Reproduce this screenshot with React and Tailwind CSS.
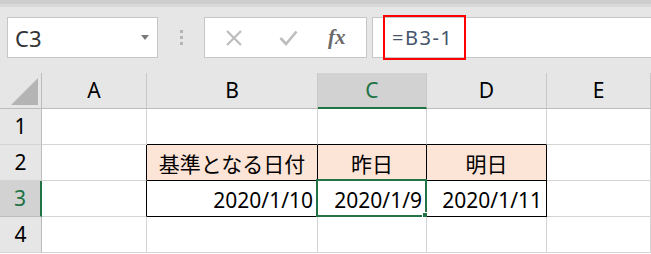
import React from "react";

const cols = [
  { key: "A", w: "w-[105px]" },
  { key: "B", w: "w-[171px]" },
  { key: "C", w: "w-[109px]" },
  { key: "D", w: "w-[120px]" },
  { key: "E", w: "flex-1" },
];

const font = { fontFamily: '"Noto Sans", "Noto Sans CJK JP", sans-serif' };

// cell contents and per-cell borders for the small table B2:D3
const cells = {
  "B1": { b: true },
  "C1": { b: true },
  "D1": { b: true },
  "A2": { r: true },
  "A3": { r: true },
  "B2": { r: true, b: true, fill: true, text: "基準となる日付", center: true },
  "C2": { r: true, b: true, fill: true, text: "昨日", center: true },
  "D2": { r: true, b: true, fill: true, text: "明日", center: true },
  "B3": { r: true, b: true, text: "2020/1/10" },
  "C3": { r: true, b: true, text: "2020/1/9", selected: true },
  "D3": { r: true, b: true, text: "2020/1/11" },
};

function Cell({ col, row }) {
  const c = cells[col.key + row] || {};
  return (
    <div
      className={`relative flex h-full items-center border-b border-r px-[4px] text-[21px] text-black ${col.w} ${
        c.r ? "border-r-black" : "border-r-[#d4d4d4]"
      } ${c.b ? "border-b-black" : "border-b-[#d4d4d4]"} ${c.fill ? "bg-[#fce4d6]" : "bg-white"} ${
        c.center ? "justify-center" : "justify-end"
      }`}
    >
      {c.text && <span className="pt-[3px] leading-none">{c.text}</span>}
      {c.selected && (
        <div className="absolute -left-[2px] -top-[2px] h-[38px] w-[111px] border-2 border-[#217346]">
          <div className="absolute -bottom-[5px] -right-[5px] h-[8px] w-[8px] border border-white bg-[#217346]" />
        </div>
      )}
    </div>
  );
}

export default function App() {
  return (
    <div className="h-[254px] w-[651px] overflow-hidden bg-white" style={font}>
      {/* window edge */}
      <div className="h-[4px] bg-[#cdcdcd]" />
      <div className="h-[3px] bg-[#d9d9d9]" />

      {/* formula bar */}
      <div className="flex h-[66px] items-start bg-[#e6e6e6] pl-[7px] pt-[10px]">
        <div className="flex h-[41px] w-[151px] items-center justify-between border border-[#c6c6c6] bg-white pl-[7px] pr-[8px]">
          <span className="text-[22px] leading-none text-[#333]">C3</span>
          <svg width="8" height="5" viewBox="0 0 8 5">
            <path d="M0 0h8L4 5z" fill="#7a7a7a" />
          </svg>
        </div>
        <div className="flex h-[41px] w-[46px] flex-col items-center justify-center gap-[3px]">
          <span className="h-[3px] w-[3px] bg-[#b4b4b4]" />
          <span className="h-[3px] w-[3px] bg-[#b4b4b4]" />
          <span className="h-[3px] w-[3px] bg-[#b4b4b4]" />
        </div>
        <div className="flex h-[41px] w-[163px] items-center border border-[#c6c6c6] bg-white">
          <svg className="ml-[20px]" width="18" height="18" viewBox="0 0 18 18">
            <path d="M2 2l14 14M16 2L2 16" stroke="#bdbdbd" strokeWidth="2.2" />
          </svg>
          <svg className="ml-[36px]" width="19" height="16" viewBox="0 0 19 16">
            <path d="M1.5 8l5.5 6L17.5 1.5" stroke="#bdbdbd" strokeWidth="2.6" fill="none" />
          </svg>
          <span
            className="ml-[30px] text-[21px] italic leading-none text-[#6a6a6a]"
            style={{ fontFamily: '"Liberation Serif", serif' }}
          >
            <b>fx</b>
          </span>
        </div>
        <div className="relative ml-[5px] h-[41px] flex-1 border-y border-l border-[#c6c6c6] bg-white">
          <div className="absolute -top-[3px] left-[10px] flex h-[45px] w-[83px] items-center border-2 border-[#ff0000] pl-[7px]">
            <span className="text-[20px] leading-none tracking-[1.5px] text-[#44546a]">=B3-1</span>
          </div>
        </div>
      </div>

      {/* column headers */}
      <div className="flex h-[36px] bg-[#e6e6e6]">
        <div className="flex h-full w-[42px] items-end justify-end border-b border-r border-[#bcbcbc] pb-[3px] pr-[3px]">
          <svg width="27" height="27" viewBox="0 0 27 27">
            <path d="M27 0V27H0z" fill="#b4b4b4" />
          </svg>
        </div>
        {cols.map((col) => (
          <div
            key={col.key}
            className={`flex h-full items-center justify-center border-r border-[#c8c8c8] text-[21px] leading-none ${col.w} ${
              col.key === "C"
                ? "border-b-2 border-b-[#217346] bg-[#d2d2d2] text-[#217346]"
                : "border-b border-b-[#bcbcbc] text-black"
            }`}
          >
            {col.key}
          </div>
        ))}
      </div>

      {/* rows */}
      {[1, 2, 3, 4].map((row) => (
        <div key={row} className="flex h-[36px]">
          <div
            className={`flex h-full w-[42px] items-center justify-center border-b border-r text-[21px] leading-none ${
              row === 3
                ? "border-b-[#bcbcbc] border-r-2 border-r-[#217346] bg-[#d2d2d2] text-[#217346]"
                : "border-b-[#d4d4d4] border-r-[#bcbcbc] bg-[#e6e6e6] text-black"
            }`}
          >
            {row}
          </div>
          {cols.map((col) => (
            <Cell key={col.key} col={col} row={row} />
          ))}
        </div>
      ))}
    </div>
  );
}
